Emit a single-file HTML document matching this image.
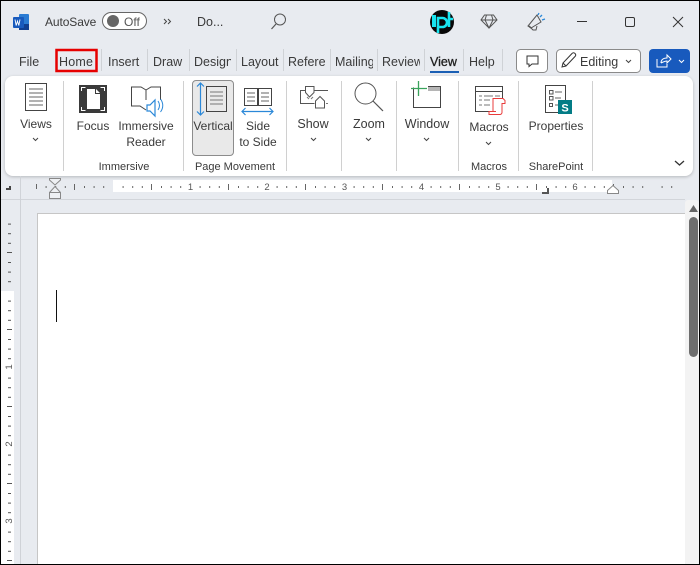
<!DOCTYPE html>
<html><head><meta charset="utf-8">
<style>
html,body{margin:0;padding:0;background:#e8ebf0;}
#r{position:relative;width:700px;height:565px;overflow:hidden;background:#e8ebf0;font-family:"Liberation Sans",sans-serif;color:#333;}
svg{position:absolute;left:0;top:0;z-index:2;}
.t{position:absolute;font-size:12.5px;line-height:16px;white-space:nowrap;color:#3a3a3a;z-index:3;}
.s{font-size:12px;}
.g{font-size:11px;top:159px;}
.c{text-align:center;}
.clip{overflow:hidden;}
.sep{position:absolute;width:1px;background:#d0d0d0;z-index:1;}
</style></head><body>
<div id="r">
<div class="t s" style="left:45px;top:14px;letter-spacing:-.1px;">AutoSave</div>
<div class="t s" style="left:124px;top:14px;color:#555;">Off</div>
<div class="t" style="left:197px;top:14px;">Do...</div>
<div class="t" style="left:19px;top:54px;">File</div>
<div class="t" style="left:59px;top:54px;letter-spacing:.2px;">Home</div>
<div class="t" style="left:108px;top:54px;">Insert</div>
<div class="t" style="left:153px;top:54px;">Draw</div>
<div class="t clip" style="left:194px;top:54px;width:37px;">Design</div>
<div class="t clip" style="left:241px;top:54px;width:39px;">Layout</div>
<div class="t clip" style="left:288px;top:54px;width:38px;">References</div>
<div class="t clip" style="left:335px;top:54px;width:38px;">Mailings</div>
<div class="t clip" style="left:382px;top:54px;width:38px;">Review</div>
<div class="t" style="left:430px;top:54px;color:#222;-webkit-text-stroke:.3px #222;">View</div>
<div class="t" style="left:469px;top:54px;">Help</div>
<div class="t" style="left:580px;top:54px;">Editing</div>

<div style="position:absolute;left:5px;top:76px;width:688px;height:100px;background:#fff;border-radius:8px;box-shadow:0 1px 3px rgba(0,0,0,.22);z-index:1;"></div>
<div style="position:absolute;left:192px;top:80px;width:40px;height:74px;background:#e9e9e9;border:1px solid #8c8c8c;border-radius:4px;z-index:1;"></div>
<div class="sep" style="left:63px;top:81px;height:90px;"></div>
<div class="sep" style="left:183px;top:81px;height:90px;"></div>
<div class="sep" style="left:286px;top:81px;height:90px;"></div>
<div class="sep" style="left:341px;top:81px;height:90px;"></div>
<div class="sep" style="left:396px;top:81px;height:90px;"></div>
<div class="sep" style="left:458px;top:81px;height:90px;"></div>
<div class="sep" style="left:518px;top:81px;height:90px;"></div>
<div class="sep" style="left:592px;top:81px;height:90px;"></div>

<div class="t s c" style="left:6px;width:60px;top:116px;">Views</div>
<div class="t s c" style="left:63px;width:60px;top:118px;">Focus</div>
<div class="t s c" style="left:116px;width:60px;top:118px;">Immersive</div>
<div class="t s c" style="left:116px;width:60px;top:134px;">Reader</div>
<div class="t s c" style="left:184px;width:58px;top:118px;">Vertical</div>
<div class="t s c" style="left:229px;width:58px;top:118px;">Side</div>
<div class="t s c" style="left:229px;width:58px;top:134px;">to Side</div>
<div class="t c" style="left:284px;width:58px;top:116px;">Show</div>
<div class="t c" style="left:340px;width:58px;top:116px;">Zoom</div>
<div class="t c" style="left:398px;width:58px;top:116px;">Window</div>
<div class="t s c" style="left:459px;width:60px;top:119px;">Macros</div>
<div class="t s c" style="left:521px;width:70px;top:118px;">Properties</div>
<div class="t g c" style="left:84px;width:80px;">Immersive</div>
<div class="t g c" style="left:185px;width:100px;">Page Movement</div>
<div class="t g c" style="left:459px;width:60px;">Macros</div>
<div class="t g c" style="left:518px;width:76px;">SharePoint</div>

<svg width="700" height="565" viewBox="0 0 700 565" fill="none">
<defs>
<pattern id="h" x="113" y="180" width="77" height="14" patternUnits="userSpaceOnUse">
<g fill="#666"><rect x="9.6" y="6" width="1" height="2"/><rect x="19.2" y="6" width="1" height="2"/><rect x="28.8" y="6" width="1" height="2"/><rect x="38" y="4" width="1" height="6"/><rect x="48" y="6" width="1" height="2"/><rect x="57.6" y="6" width="1" height="2"/><rect x="67.2" y="6" width="1" height="2"/></g>
</pattern>
<pattern id="v" x="0" y="291" width="20" height="77" patternUnits="userSpaceOnUse">
<g fill="#555"><rect x="8" y="9.6" width="3" height="1"/><rect x="8" y="19.2" width="3" height="1"/><rect x="8" y="28.8" width="3" height="1"/><rect x="7" y="38" width="5" height="1"/><rect x="8" y="48" width="3" height="1"/><rect x="8" y="57.6" width="3" height="1"/><rect x="8" y="67.2" width="3" height="1"/></g>
</pattern>
<pattern id="hn" x="36" y="180" width="77" height="14" patternUnits="userSpaceOnUse">
<g fill="#666"><rect x="0" y="4" width="1" height="5"/><rect x="9.6" y="6" width="1" height="2"/><rect x="19.2" y="6" width="1" height="2"/><rect x="28.8" y="6" width="1" height="2"/><rect x="38" y="4" width="1" height="6"/><rect x="48" y="6" width="1" height="2"/><rect x="57.6" y="6" width="1" height="2"/><rect x="67.2" y="6" width="1" height="2"/></g>
</pattern>
<pattern id="vn" x="0" y="214" width="20" height="77" patternUnits="userSpaceOnUse">
<g fill="#555"><rect x="8" y="9.6" width="3" height="1"/><rect x="8" y="19.2" width="3" height="1"/><rect x="8" y="28.8" width="3" height="1"/><rect x="7" y="38" width="5" height="1"/><rect x="8" y="48" width="3" height="1"/><rect x="8" y="57.6" width="3" height="1"/><rect x="8" y="67.2" width="3" height="1"/></g>
</pattern>
</defs>

<!-- word logo -->
<rect x="19" y="14" width="10" height="16" rx="1" fill="#2b7cd3"/><rect x="19" y="24" width="10" height="6" fill="#103f91"/><rect x="13" y="17" width="11" height="11" rx="1" fill="#185abd"/>
<path d="M15 19.5l1.2 6 1.3-4.500 1.300 4.500 1.200-6" stroke="#fff" stroke-width=".9"/>
<!-- toggle -->
<rect x="102.500" y="12.500" width="44" height="17" rx="8.500" fill="#fff" stroke="#666"/>
<circle cx="113" cy="21" r="6" fill="#666"/>
<path d="M164 19l2.500 2.500-2.500 2.500M168 19l2.500 2.500-2.500 2.500" stroke="#444"/>
<circle cx="280" cy="19.500" r="5.500" stroke="#555"/><path d="M276 24l-4.500 5" stroke="#555" stroke-width="1.200"/>
<!-- ph logo -->
<circle cx="442" cy="22" r="12" fill="#080808"/>
<path d="M432 15h4v12h-4z" fill="#19e5f0"/>
<path d="M438 33V18h4.500a4 4 0 010 9H438" stroke="#19e5f0" stroke-width="2.600"/>
<path d="M449 12v15M449 19h4" stroke="#19e5f0" stroke-width="2.600"/>
<!-- diamond -->
<path d="M484.500 15h9l3.500 5-8 8-8-8zM481 20h16M486.500 15l-1.500 5 4 8 4-8-1.500-5" stroke="#555"/>
<!-- megaphone -->
<path d="M528 26l9-11 4 7-10 6zM531 28l2 2h3l1-4" stroke="#555"/><path d="M529 26l2 2" stroke="#555" stroke-width="1.500"/>
<path d="M540 17l2-2M542 20l3-1M538 15l1-2" stroke="#2b88d8" stroke-width="1.300"/>
<!-- window controls -->
<path d="M577 21.500h10" stroke="#333"/><rect x="625.500" y="17.500" width="9" height="9" rx="1.500" stroke="#333"/><path d="M673 17l10 10M683 17l-10 10" stroke="#333"/>

<!-- tab separators -->
<g fill="#cfd2d6"><rect x="101" y="49" width="1" height="22"/><rect x="147" y="49" width="1" height="22"/><rect x="189" y="49" width="1" height="22"/><rect x="236" y="49" width="1" height="22"/><rect x="283" y="49" width="1" height="22"/><rect x="330" y="49" width="1" height="22"/><rect x="377" y="49" width="1" height="22"/><rect x="424" y="49" width="1" height="22"/><rect x="463" y="49" width="1" height="22"/><rect x="502" y="49" width="1" height="22"/></g>
<rect x="56.500" y="50" width="40" height="21" stroke="#e60000" stroke-width="2.500"/>
<rect x="430" y="71" width="29" height="2" fill="#1a5fb4"/>
<!-- comments button -->
<rect x="516.500" y="49.500" width="31" height="23" rx="4" fill="#fff" stroke="#8a8a8a"/>
<path d="M527 56h11v8h-6l-3 2.500v-2.500h-2z" stroke="#333"/>
<!-- editing button -->
<rect x="556.500" y="49.500" width="84" height="23" rx="4" fill="#fff" stroke="#8a8a8a"/>
<path d="M562 67l1-4 9-9.500c1-1 2-1 3 0s1 2 0 3l-9 9.500zM563 63l3 3" stroke="#333"/>
<path d="M626 60l2.500 2.500 2.500-2.500" stroke="#444"/>
<!-- share -->
<rect x="649" y="49" width="41" height="24" rx="4" fill="#185abd"/>
<path d="M657 59v8h10v-3M661 63c0-3 2-5 6-5v-3l4 4-4 4v-2c-2 0-4 1-6 2" stroke="#fff"/>
<path d="M679 60l2.500 2.500 2.500-2.500" stroke="#fff"/>

<!-- Views icon -->
<rect x="25.500" y="83.500" width="21" height="27" fill="#fff" stroke="#444"/>
<path d="M29 89h14M29 93h14M29 97h14M29 101h14M29 105h14" stroke="#666"/>
<path d="M33 138l2.500 2.500 2.500-2.500" stroke="#444"/>
<!-- Focus -->
<rect x="79" y="85" width="28" height="28" fill="#3a3a3a"/>
<path d="M81.500 91v-3.500h4M104.500 91v-3.500h-4M81.500 107v3.500h4M104.500 107v3.500h-4" stroke="#fff"/>
<path d="M87 89h9l4 4v16H87z" fill="#fff"/><path d="M95.500 89v4.500h5" stroke="#3a3a3a"/>
<!-- Immersive Reader -->
<path d="M146 90l-5-3h-9.500v19h8.500l6 4M146 90l5-3h9.500v13M146 90v10" stroke="#444"/>
<path d="M147 105h3l5-5v16l-5-5h-3z" fill="#fff" stroke="#2b88d8" stroke-width="1.200"/>
<path d="M158 101c2 3 2 6 0 9M160.500 99c3 4 3 9 0 13" stroke="#2b88d8"/>
<!-- Vertical -->
<path d="M200.500 83v32M197 86.500l3.500-3.500 3.500 3.500M197 111.500l3.500 3.500 3.500-3.500" stroke="#2b88d8" stroke-width="1.200"/>
<rect x="206.500" y="86.500" width="20" height="25" stroke="#444"/>
<path d="M210 92h13M210 96h13M210 100h13M210 104h13" stroke="#777"/>
<!-- Side to side -->
<rect x="244.500" y="88.500" width="13" height="17" stroke="#444"/><rect x="258.500" y="88.500" width="13" height="17" stroke="#444"/>
<path d="M247 93h8M247 97h8M247 101h8M261 93h8M261 97h8M261 101h8" stroke="#666"/>
<path d="M242 111.500h31M245.500 108l-3.500 3.500 3.500 3.500M269.500 108l3.500 3.500-3.500 3.500" stroke="#2b88d8" stroke-width="1.200"/>
<path d="M311 138l2.500 2.500 2.500-2.500" stroke="#444"/>
<!-- Show -->
<path d="M305 90.500h-4.500v13h14M314 90.500h14" stroke="#555"/>
<path d="M305.500 86.500h8.500v6l-4.500 4.500-4-4.500z" stroke="#555"/>
<path d="M315.500 108v-7l4.500-4.500 4.500 4.500v7z" stroke="#555" fill="#fff"/>
<path d="M326 103.500h2M307 97l2 2M311 99l2-2" stroke="#777"/>
<!-- Zoom -->
<circle cx="365.500" cy="93.500" r="10.500" stroke="#555" stroke-width="1"/><path d="M373 101l10 10" stroke="#555" stroke-width="1.200"/>
<path d="M366 138l2.500 2.500 2.500-2.500" stroke="#444"/>
<!-- Window -->
<path d="M428 86.500h12.500v21h-27v-20" fill="#fff" stroke="#444"/>
<rect x="428" y="87" width="12" height="4" fill="#b5b5b5"/>
<path d="M418.500 81v15M411 88.500h16" stroke="#3aa35c" stroke-width="1.300"/>
<path d="M424 138l2.500 2.500 2.500-2.500" stroke="#444"/>
<!-- Macros -->
<path d="M490 111.500h-14.500v-25h27v12" fill="#fff" stroke="#444"/>
<path d="M476 91.500h26" stroke="#444"/>
<path d="M479 96h3M484 96h9M495 96h5M479 100h3M484 100h6M479 105h3M484 105h6" stroke="#777"/>
<path d="M493 98.500h10l2 2v3h-3v9c0 1-1 2-2 2h-11v-3h4z" fill="#fff" stroke="#e83c3c"/>
<path d="M489 111.500h7" stroke="#e83c3c"/>
<path d="M486 142l2.500 2.500 2.500-2.500" stroke="#444"/>
<!-- Properties -->
<rect x="545.500" y="85.500" width="20" height="27" fill="#fff" stroke="#444"/>
<path d="M549.500 90.500h3.500v3.500h-3.500zM549.500 96.500h3.500v3.500h-3.500zM549.500 103.500h3v3h-3z" stroke="#555"/>
<path d="M555 92h7M555 98h6M555 105h3" stroke="#666"/>
<rect x="558" y="100" width="14" height="14" fill="#037c86"/>
<text x="565" y="111.500" font-family="Liberation Sans" font-size="11" font-weight="700" fill="#fff" text-anchor="middle">S</text>
<path d="M675 161l4.500 4 4.500-4" stroke="#333" stroke-width="1.300"/>

<!-- ruler -->
<rect x="113" y="180" width="499" height="12" fill="#fff"/>
<rect x="36" y="180" width="77" height="14" fill="url(#hn)"/>
<rect x="113" y="180" width="560" height="14" fill="url(#h)"/>
<g font-family="Liberation Sans" font-size="9.500" fill="#555" text-anchor="middle"><text x="190.500" y="190">1</text><text x="267" y="190">2</text><text x="344.500" y="190">3</text><text x="421.500" y="190">4</text><text x="498" y="190">5</text><text x="575" y="190">6</text></g>
<path d="M6 189h5M10 186v4" stroke="#444" stroke-width="2"/>
<path d="M20.500 176v24" stroke="#d0d3d8"/>
<path d="M49.500 178.500h11v1.500l-5.500 5-5.500-5zM49.500 192.500l5.500-6 5.500 6v6H49.500zM49.500 192.500h11" stroke="#888" fill="#eef0f3"/>
<path d="M607.500 190.500l5.500-5 5.500 5v3h-11z" fill="#fff" stroke="#888"/>
<path d="M548 188v5h-6" stroke="#555" stroke-width="2"/>
<rect x="0" y="199" width="685" height="1" fill="#d2d5da"/>

<!-- left ruler -->
<rect x="1" y="291" width="13" height="274" fill="#fff"/>
<rect x="0" y="214" width="20" height="77" fill="url(#vn)"/>
<rect x="0" y="291" width="20" height="274" fill="url(#v)"/>
<g font-family="Liberation Sans" font-size="9.500" fill="#555" text-anchor="middle">
<text transform="translate(12,367) rotate(-90)">1</text><text transform="translate(12,444) rotate(-90)">2</text><text transform="translate(12,521) rotate(-90)">3</text></g>
<rect x="20" y="199" width="1" height="366" fill="#cfd2d7"/>

<!-- page -->
<rect x="38" y="214" width="647" height="351" fill="#fff"/>
<path d="M37.500 565V213.500H685" stroke="#c6c6c6"/>
<rect x="56" y="290" width="1" height="32" fill="#111"/>

<!-- scrollbar -->
<rect x="685" y="200" width="14" height="365" rx="3" fill="#f3f3f3"/>
<path d="M689 212l4.500-7 4.500 7z" fill="#666"/>
<rect x="689" y="217" width="9" height="140" rx="4.500" fill="#6e6e6e"/>

<!-- outer border -->
<rect x=".5" y=".5" width="699" height="564" stroke="#000"/>
</svg>
</div>
</body></html>
